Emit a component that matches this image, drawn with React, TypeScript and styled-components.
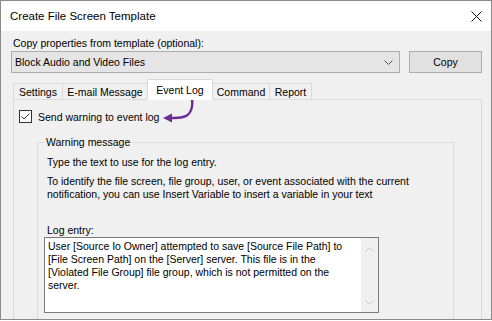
import React from "react";
import styled, { createGlobalStyle } from "styled-components";

const Global = createGlobalStyle`
  html, body {
    margin: 0;
    padding: 0;
    background: #ffffff;
  }
  body {
    font-family: "Liberation Sans", Arial, sans-serif;
    font-size: 10.5px;
    color: #000;
  }
`;

const Window = styled.div`
  position: relative;
  width: 492px;
  height: 320px;
  box-sizing: border-box;
  border: 1px solid #8a8a8a;
  background: #f0f0f0;
  overflow: hidden;
`;

const TitleBar = styled.div`
  height: 30px;
  background: #fff;
  display: flex;
  align-items: center;
  justify-content: space-between;
  padding: 0 9px 0 9px;
  font-size: 11.5px;
`;

const Body = styled.div`
  padding: 0 9px 0 12px;
`;

const FieldLabel = styled.div`
  margin-top: 6px;
  line-height: 13px;
  height: 13px;
`;

const Row = styled.div`
  display: flex;
  gap: 9px;
  margin: 1px 0 0 -2px;
  height: 22px;
`;

const Select = styled.div`
  flex: 1;
  display: flex;
  align-items: center;
  justify-content: space-between;
  box-sizing: border-box;
  border: 1px solid #adadad;
  background: #e5e5e5;
  padding: 0 6px 0 3px;
`;

const Button = styled.div`
  width: 73px;
  box-sizing: border-box;
  border: 1px solid #adadad;
  background: #e1e1e1;
  display: flex;
  align-items: center;
  justify-content: center;
`;

const TabStrip = styled.div`
  display: flex;
  align-items: flex-end;
  height: 20px;
  margin-top: 6px;
  position: relative;
  z-index: 1;
`;

const Tab = styled.div<{ $w: number; $active?: boolean }>`
  width: ${(p) => p.$w}px;
  height: ${(p) => (p.$active ? 21 : 16)}px;
  margin-bottom: ${(p) => (p.$active ? -1 : 0)}px;
  margin-left: -1px;
  box-sizing: border-box;
  border: 1px solid #d9d9d9;
  border-bottom: none;
  background: ${(p) => (p.$active ? "#fff" : "#f0f0f0")};
  display: flex;
  align-items: center;
  justify-content: center;
  padding-top: ${(p) => (p.$active ? 0 : 1)}px;
  &:first-child {
    margin-left: 0;
  }
`;

const Panel = styled.div`
  height: 240px;
  box-sizing: border-box;
  border: 1px solid #d9d9d9;
  border-bottom: none;
  padding: 10px 27px 0 5px;
`;

const CheckRow = styled.div`
  display: flex;
  align-items: center;
  gap: 6px;
  height: 13px;
`;

const Box = styled.div`
  width: 13px;
  height: 13px;
  box-sizing: border-box;
  border: 1px solid #333;
  background: #fff;
  display: flex;
  align-items: center;
  justify-content: center;
`;

const Group = styled.fieldset`
  margin: 13px 0 0 18px;
  border: 1px solid #dcdcdc;
  border-bottom: none;
  padding: 0 0 20px 6px;
  min-width: 0;
`;

const Legend = styled.legend`
  padding: 0 2px;
  line-height: 13px;
`;

const Text = styled.div<{ $top: number }>`
  margin-top: ${(p) => p.$top}px;
  padding-left: 3px;
  line-height: 13px;
`;

const Memo = styled.div`
  display: flex;
  width: 335px;
  height: 76px;
  box-sizing: border-box;
  border: 1px solid #7a7a7a;
  background: #fff;
`;

const MemoText = styled.div`
  flex: 1;
  padding: 2px 0 0 3px;
  line-height: 13px;
`;

const ScrollBar = styled.div`
  width: 17px;
  background: #f0f0f0;
  display: flex;
  flex-direction: column;
  justify-content: space-between;
  align-items: center;
  padding: 9px 0 7px;
`;

const Arrow = styled.svg`
  position: absolute;
  left: 0;
  top: 0;
  pointer-events: none;
`;

const Chevron = ({ up, color }: { up?: boolean; color: string }) => (
  <svg width="9" height="5" viewBox="0 0 9 5">
    <path
      d={up ? "M0.5 4.5 L4.5 0.5 L8.5 4.5" : "M0.5 0.5 L4.5 4.5 L8.5 0.5"}
      fill="none"
      stroke={color}
      strokeWidth="1"
    />
  </svg>
);

const tabs = [
  { label: "Settings", w: 50 },
  { label: "E-mail Message", w: 86 },
  { label: "Event Log", w: 66, active: true },
  { label: "Command", w: 58 },
  { label: "Report", w: 43 },
];

export default function App() {
  return (
    <>
      <Global />
      <Window>
        <TitleBar>
          <span>Create File Screen Template</span>
          <svg width="11" height="11" viewBox="0 0 11 11">
            <path d="M0.5 0.5 L10.5 10.5 M10.5 0.5 L0.5 10.5" stroke="#111" strokeWidth="1" />
          </svg>
        </TitleBar>
        <Body>
          <FieldLabel>Copy properties from template (optional):</FieldLabel>
          <Row>
            <Select>
              <span>Block Audio and Video Files</span>
              <Chevron color="#555" />
            </Select>
            <Button>Copy</Button>
          </Row>
          <TabStrip>
            {tabs.map((t) => (
              <Tab key={t.label} $w={t.w} $active={t.active}>
                {t.label}
              </Tab>
            ))}
          </TabStrip>
          <Panel>
            <CheckRow>
              <Box>
                <svg width="11" height="11" viewBox="0 0 11 11">
                  <path d="M1.5 5.5 L4 8 L9.5 2.5" fill="none" stroke="#333" strokeWidth="1" />
                </svg>
              </Box>
              <span>Send warning to event log</span>
            </CheckRow>
            <Group>
              <Legend>Warning message</Legend>
              <Text $top={7}>Type the text to use for the log entry.</Text>
              <Text $top={6}>
                To identify the file screen, file group, user, or event associated with the current
                <br />
                notification, you can use Insert Variable to insert a variable in your text
              </Text>
              <Text $top={23}>Log entry:</Text>
              <Memo>
                <MemoText>
                  User [Source Io Owner] attempted to save [Source File Path] to
                  <br />
                  [File Screen Path] on the [Server] server. This file is in the
                  <br />
                  [Violated File Group] file group, which is not permitted on the
                  <br />
                  server.
                </MemoText>
                <ScrollBar>
                  <Chevron up color="#c4c4c4" />
                  <Chevron color="#c4c4c4" />
                </ScrollBar>
              </Memo>
            </Group>
          </Panel>
        </Body>
        <Arrow width="492" height="321" viewBox="0 0 492 321">
          <path
            d="M191 98 C192 106 190 114 182 116 C178 117 174 117 170 117"
            fill="none"
            stroke="#6e2c94"
            strokeWidth="2.5"
            strokeLinecap="round"
          />
          <path d="M162 117 L171 112.5 L171 121.5 Z" fill="#6e2c94" />
        </Arrow>
      </Window>
    </>
  );
}
